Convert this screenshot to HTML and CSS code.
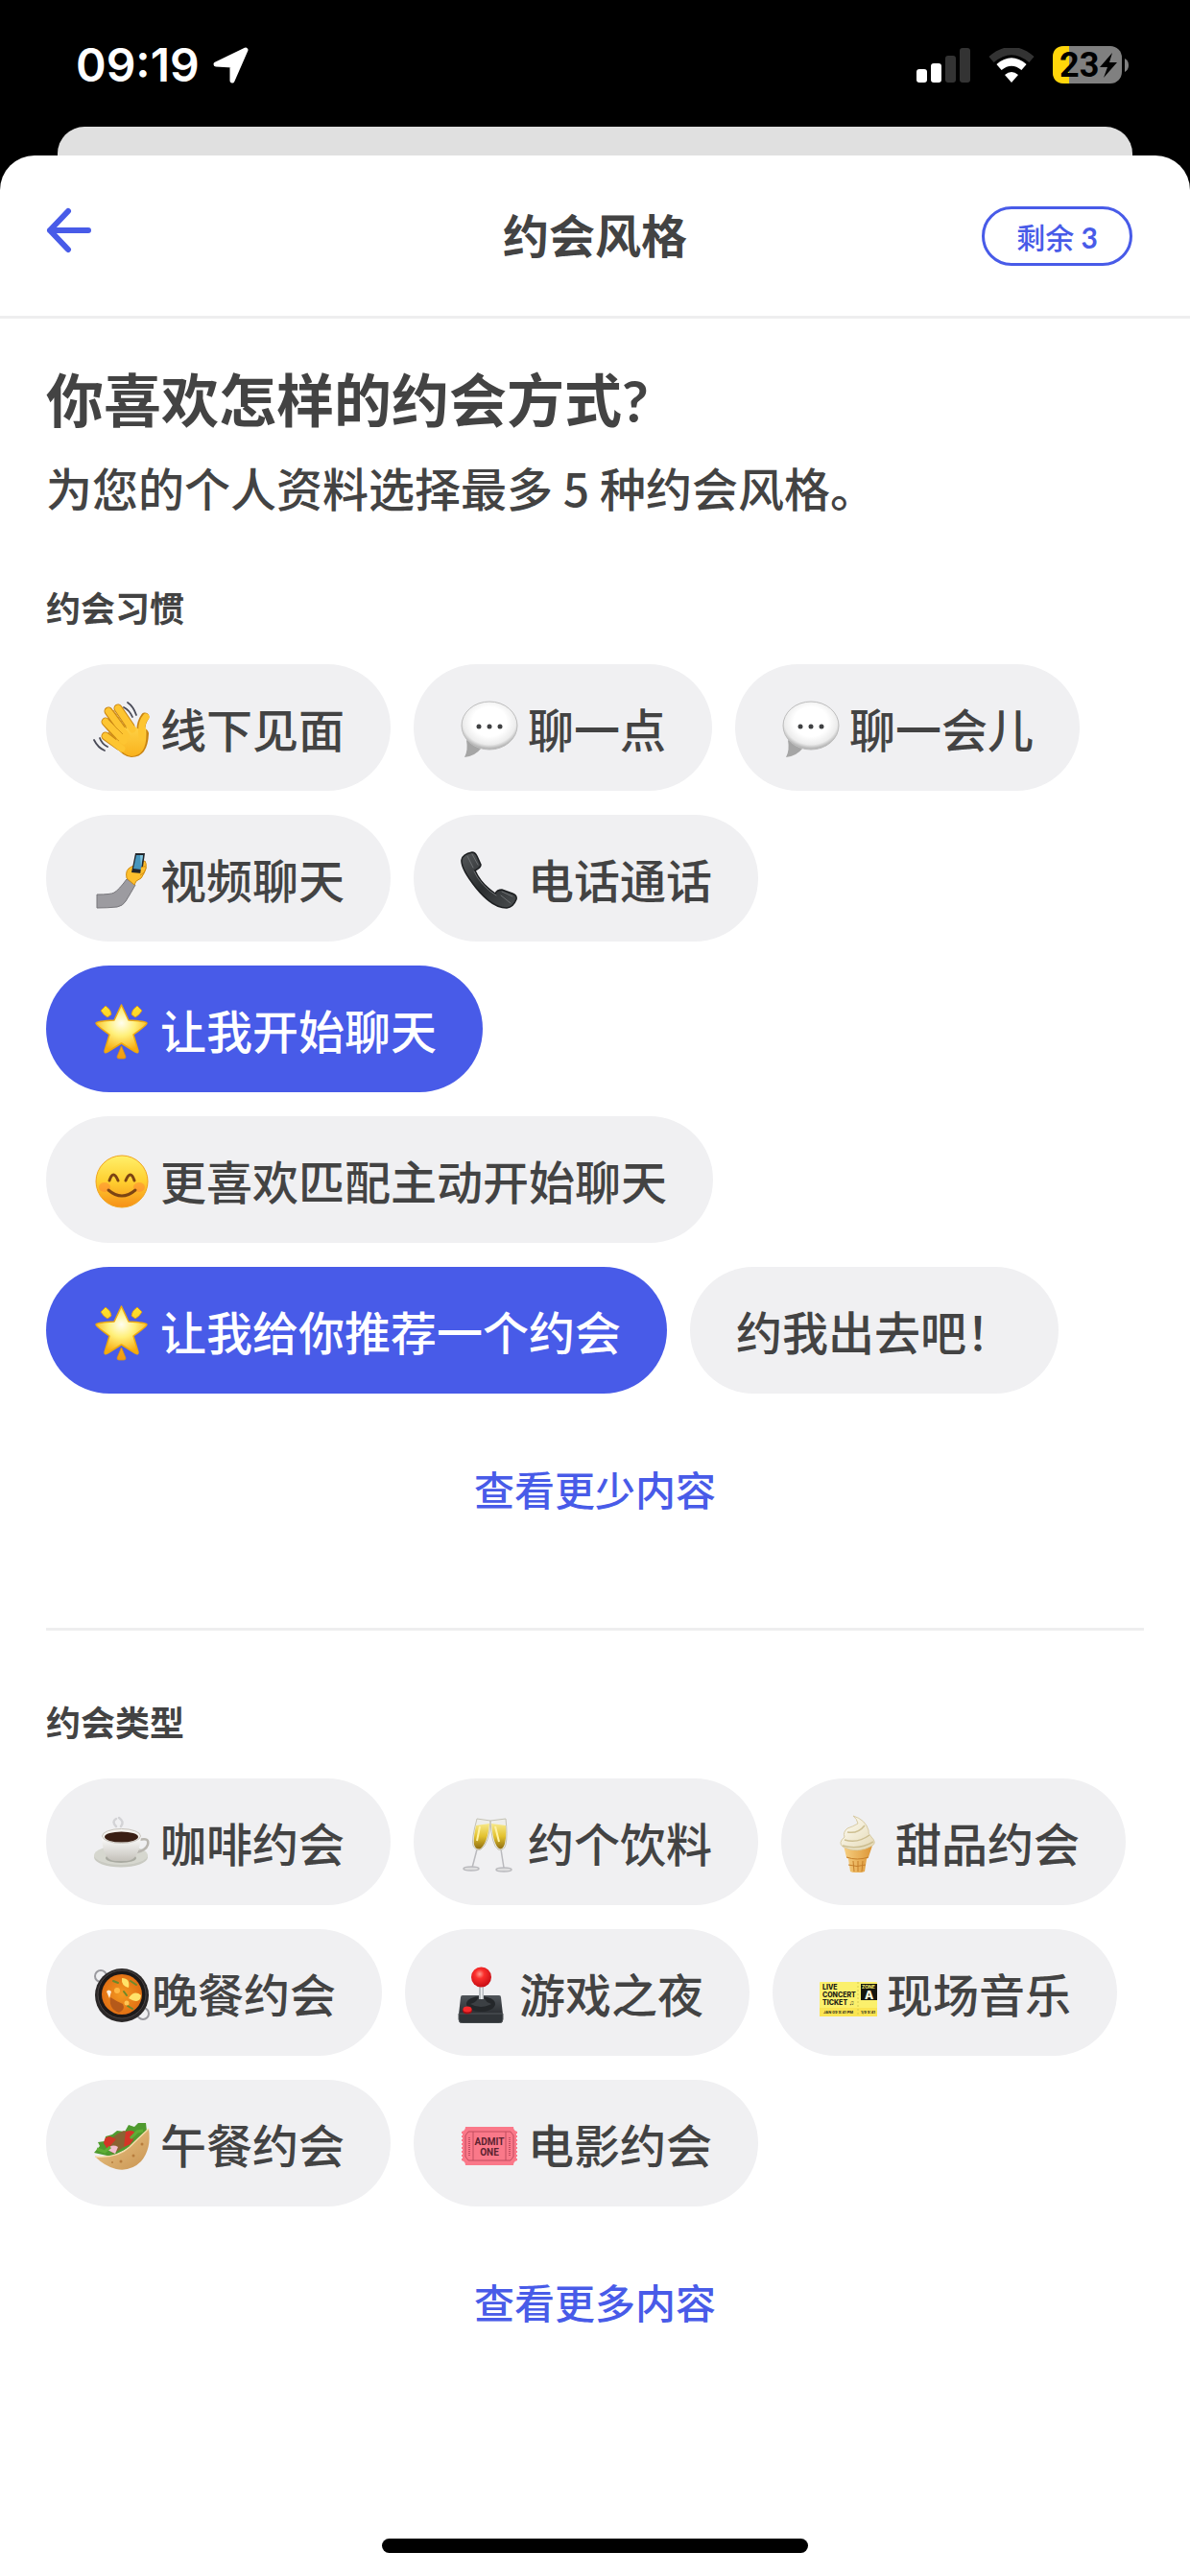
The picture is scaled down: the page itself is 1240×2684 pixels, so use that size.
FILE: index.html
```html
<!DOCTYPE html>
<html lang="zh-CN">
<head>
<meta charset="utf-8">
<meta name="viewport" content="width=device-width, initial-scale=1">
<title>约会风格</title>
<link rel="stylesheet" href="styles.css">
</head>
<body>
<svg class="defs" width="0" height="0" aria-hidden="true">
  <defs>
    <linearGradient id="g-skin" x1="0" y1="0" x2="0" y2="1"><stop offset="0" stop-color="#ffd54a"/><stop offset="1" stop-color="#f9b21d"/></linearGradient>
    <radialGradient id="g-bubble" cx=".5" cy=".42" r=".56"><stop offset=".55" stop-color="#fff"/><stop offset=".85" stop-color="#ececec"/><stop offset="1" stop-color="#b4b4b4"/></radialGradient>
    <linearGradient id="g-phone" x1="0" y1="0" x2="1" y2="1"><stop offset="0" stop-color="#55585a"/><stop offset=".5" stop-color="#2b2e30"/><stop offset="1" stop-color="#4a4d4f"/></linearGradient>
    <radialGradient id="g-star" cx=".5" cy=".38" r=".6"><stop offset="0" stop-color="#fffef0"/><stop offset=".45" stop-color="#fff07a"/><stop offset="1" stop-color="#f8ac10"/></radialGradient>
    <linearGradient id="g-ray" x1="0" y1="0" x2="0" y2="1"><stop offset="0" stop-color="#ffe32e"/><stop offset="1" stop-color="#f29a12"/></linearGradient>
    <linearGradient id="g-face" x1="0" y1="0" x2="0" y2="1"><stop offset="0" stop-color="#fff06a"/><stop offset=".5" stop-color="#ffcf30"/><stop offset="1" stop-color="#f68f16"/></linearGradient>
    <linearGradient id="g-cup" x1="0" y1="0" x2="0" y2="1"><stop offset="0" stop-color="#fff"/><stop offset="1" stop-color="#c4c1ba"/></linearGradient>
    <linearGradient id="g-wine" x1="0" y1="0" x2="0" y2="1"><stop offset="0" stop-color="#f7e98a"/><stop offset=".5" stop-color="#e3c22f"/><stop offset="1" stop-color="#8f6d10"/></linearGradient>
    <linearGradient id="g-cream" x1="0" y1="0" x2="1" y2="1"><stop offset="0" stop-color="#fffef6"/><stop offset="1" stop-color="#e4d8b4"/></linearGradient>
    <linearGradient id="g-cone" x1="0" y1="0" x2="1" y2="0"><stop offset="0" stop-color="#f6cf81"/><stop offset="1" stop-color="#dd9636"/></linearGradient>
    <radialGradient id="g-curry" cx=".5" cy=".5" r=".55"><stop offset="0" stop-color="#f39a22"/><stop offset="1" stop-color="#e06c12"/></radialGradient>
    <radialGradient id="g-ball" cx=".42" cy=".35" r=".65"><stop offset="0" stop-color="#ff9a8e"/><stop offset=".35" stop-color="#fb2f2c"/><stop offset="1" stop-color="#c80d14"/></radialGradient>
    <linearGradient id="g-base" x1="0" y1="0" x2="0" y2="1"><stop offset="0" stop-color="#50555a"/><stop offset="1" stop-color="#2a2d31"/></linearGradient>
    <linearGradient id="g-wrap" x1="0" y1="0" x2="1" y2="1"><stop offset="0" stop-color="#edc98a"/><stop offset="1" stop-color="#c99452"/></linearGradient>

    <symbol id="e-bubble" viewBox="0 0 62 64">
      <path d="M7 45Q9 56 5 63Q16 62 23 53Z" fill="#a5a5a5"/>
      <ellipse cx="31" cy="30" rx="29" ry="25" fill="url(#g-bubble)" stroke="#bdbdbd"/>
      <g fill="#3f4042"><circle cx="20" cy="31" r="2.500"/><circle cx="31" cy="31" r="2.500"/><circle cx="42" cy="31" r="2.500"/></g>
    </symbol>
    <symbol id="e-star" viewBox="0 0 62 64">
      <path d="M9 13L14 8Q20 12 20 17L16 20Q12 18 9 13ZM52 13L47 8Q41 12 41 17L45 20Q49 18 52 13ZM30.500 50L35 61Q35 63 33 63H28Q26 63 26 61Z" fill="url(#g-ray)" stroke="#dd940e" stroke-width=".8"/>
      <path d="M30.500 7L38 23Q56 24 57 26Q57 28 43 38L48 55Q48 58 45 56L30.500 47L16 56Q13 58 13 55L18 38Q4 28 4 26Q5 24 23 23Z" fill="url(#g-star)" stroke="#eda90f" stroke-width="1.500" stroke-linejoin="round"/>
    </symbol>
  </defs>
</svg>

<header class="status">
  <div class="status-left">
    <span class="time">09:19</span>
    <svg class="location" viewBox="0 0 38 38" width="38" height="38" aria-hidden="true"><path d="M3 18L34 3L20 35V19Z" fill="#fff" stroke="#fff" stroke-width="5" stroke-linejoin="round"/></svg>
  </div>
  <div class="status-right">
    <svg viewBox="0 0 56 36" width="56" height="36" role="img" aria-label="信号">
      <rect x="0" y="22" width="11" height="14" rx="3" fill="#fff"/><rect x="15" y="16" width="11" height="20" rx="3" fill="#fff"/>
      <rect x="30" y="8" width="11" height="28" rx="3" fill="#333"/><rect x="45" y="0" width="11" height="36" rx="3" fill="#333"/>
    </svg>
    <svg viewBox="0 0 48 36" width="48" height="36" role="img" aria-label="无线网络">
      <path d="M3 12Q24 -6 45 12" fill="none" stroke="#333" stroke-width="8"/>
      <path d="M11 20Q24 9 37 20" fill="none" stroke="#fff" stroke-width="8"/>
      <path d="M24 36L17 28Q24 22 31 28Z" fill="#fff"/>
    </svg>
    <svg viewBox="0 0 80 40" width="80" height="40" role="img" aria-label="电池">
      <rect width="72" height="39" rx="12" fill="#808080"/>
      <path d="M12 0H17V39H12Q0 39 0 27V12Q0 0 12 0Z" fill="#ffd60a"/>
      <path d="M75 13Q79 15 79 20Q79 25 75 27Z" fill="#808080"/>
      <text class="charge" x="7" y="32">23</text>
      <path d="M62 7L49 22H57L53 33L67 17H59Z" fill="#000"/>
    </svg>
  </div>
</header>

<div class="underlay"></div>

<div class="sheet">
  <header class="bar">
    <button class="back" type="button" aria-label="返回">
      <svg viewBox="0 0 48 48" width="48" height="48" aria-hidden="true"><path d="M23 4L4 24L23 44M4 24H44" fill="none" stroke="#485be8" stroke-width="6" stroke-linecap="round" stroke-linejoin="round"/></svg>
    </button>
    <h1 class="bar-title">约会风格</h1>
    <span class="remaining">剩余<span class="num"> 3</span></span>
  </header>

  <main class="content">
    <h2 class="question">你喜欢怎样的约会方式<span class="num">?</span></h2>
    <p class="hint">为您的个人资料选择最多 5 种约会风格。</p>

    <section class="group">
      <h3 class="label">约会习惯</h3>
      <div class="chips">
        <button class="chip" type="button" aria-pressed="false">
          <svg class="emoji" viewBox="0 0 62 64" aria-hidden="true">
            <g fill="none" stroke="#c98412" stroke-width="9" stroke-linecap="round"><path d="M27 12L40 31M17 15L33 37M14 26L29 43M14 41L28 51"/><path d="M55 21Q50 28 51 38"/></g>
            <path d="M24 37L40 27L50 36Q57 30 59 38Q58 63 41 63Q33 63 23 51Z" fill="#c98412"/>
            <path d="M27 37L40 28L49 34L56 32Q59 61 41 62Q33 61 24 50Z" fill="url(#g-skin)"/>
            <g fill="none" stroke="#fdc532" stroke-width="7" stroke-linecap="round"><path d="M27 12L42 34M17 15L36 41M14 26L33 46M14 41L31 54"/><path d="M56 21Q50 28 52 42"/></g>
            <path d="M22 14L36 33M17 24L32 39M17 37L28 46" stroke="#d4951b" stroke-width="1" fill="none"/>
            <path d="M37 6Q43 10 46 19M33 11Q39 14 42 21M2 45Q6 53 13 56M8 43Q10 49 16 52" fill="none" stroke="#4a4b58" stroke-width="1.800" stroke-linecap="round"/>
          </svg>
          <span>线下见面</span>
        </button>
        <button class="chip" type="button" aria-pressed="false"><svg class="emoji" aria-hidden="true"><use href="#e-bubble"/></svg><span>聊一点</span></button>
        <button class="chip" type="button" aria-pressed="false"><svg class="emoji" aria-hidden="true"><use href="#e-bubble"/></svg><span>聊一会儿</span></button>
        <button class="chip" type="button" aria-pressed="false">
          <svg class="emoji" viewBox="0 0 62 64" aria-hidden="true">
            <path d="M5 49Q20 49 23 47Q28 44 36 33L45 39Q40 48 35 56Q32 61 26 62Q16 63 5 63Z" fill="#9c9ba0" stroke="#77767b"/>
            <path d="M36 32Q34 23 41 20L55 14Q58 19 54 27Q52 33 46 35L44 39Z" fill="#fdbf2d" stroke="#d08d14"/>
            <path d="M45 6L55 6L52 27L41 26Z" fill="#23262b"/><path d="M46 8H53L51 23L43 22Z" fill="#4796bd"/><path d="M50 8L53 8L51 21Z" fill="#83c3dc"/>
            <path d="M51 21Q57 18 56 22Q55 27 50 29" fill="#fdbf2d" stroke="#d08d14"/>
          </svg>
          <span>视频聊天</span>
        </button>
        <button class="chip" type="button" aria-pressed="false">
          <svg class="emoji" viewBox="0 0 62 64" aria-hidden="true">
            <path d="M2 13Q3 7 13 5Q16 5 18 9L22 18Q22 21 16 24Q22 38 37 48Q39 44 44 44L55 48Q60 50 59 54Q56 62 49 63Q34 63 17 42Q1 22 2 13Z" fill="url(#g-phone)" stroke="#1c1e20" stroke-width="1.500"/>
            <path d="M8 9L14 21M13 7L19 18M15 25Q22 40 38 50M44 46L55 51M43 50L53 58" fill="none" stroke="#6d7072" stroke-width="1" stroke-linecap="round"/>
          </svg>
          <span>电话通话</span>
        </button>
        <button class="chip" type="button" aria-pressed="true"><svg class="emoji" aria-hidden="true"><use href="#e-star"/></svg><span>让我开始聊天</span></button>
        <button class="chip" type="button" aria-pressed="false">
          <svg class="emoji" viewBox="0 0 62 64" aria-hidden="true">
            <circle cx="31" cy="34" r="27" fill="url(#g-face)" stroke="#f0a41d"/>
            <ellipse cx="13" cy="40" rx="6" ry="5" fill="#ff6a3a" opacity=".35"/><ellipse cx="49" cy="40" rx="6" ry="5" fill="#ff6a3a" opacity=".35"/>
            <path d="M18 33Q22 21 27 33M35 33Q40 21 44 33" fill="none" stroke="#7c4413" stroke-width="3" stroke-linecap="round"/>
            <path d="M17 43Q31 55 45 43" fill="none" stroke="#7c4413" stroke-width="3" stroke-linecap="round"/>
          </svg>
          <span>更喜欢匹配主动开始聊天</span>
        </button>
        <button class="chip" type="button" aria-pressed="true"><svg class="emoji" aria-hidden="true"><use href="#e-star"/></svg><span>让我给你推荐一个约会</span></button>
        <button class="chip" type="button" aria-pressed="false"><span>约我出去吧！</span></button>
      </div>
      <button class="toggle" type="button">查看更少内容</button>
    </section>

    <section class="group">
      <h3 class="label">约会类型</h3>
      <div class="chips">
        <button class="chip" type="button" aria-pressed="false">
          <svg class="emoji" viewBox="0 0 62 64" aria-hidden="true">
            <path d="M25 16Q20 11 25 8M30 16Q34 11 28 7" fill="none" stroke="#d3d3d6" stroke-width="2.500" stroke-linecap="round"/>
            <ellipse cx="30" cy="48" rx="28" ry="10.500" fill="#c9cac2"/><ellipse cx="30" cy="46" rx="28" ry="10" fill="#d6d7cf"/><ellipse cx="30" cy="49" rx="16" ry="5" fill="#a9aaa1"/>
            <path d="M49 30Q60 27 58 35Q56 41 46 43" fill="none" stroke="#b9b6b0" stroke-width="2.500"/>
            <path d="M10 26Q11 52 24 52H36Q49 52 51 26Z" fill="url(#g-cup)"/>
            <ellipse cx="30.500" cy="26" rx="20" ry="7.500" fill="#f4f2ee" stroke="#c7c3bc"/><ellipse cx="30.500" cy="27" rx="17.500" ry="5.500" fill="#3a1f14"/>
          </svg>
          <span>咖啡约会</span>
        </button>
        <button class="chip" type="button" aria-pressed="false">
          <svg class="emoji" viewBox="0 0 62 64" aria-hidden="true">
            <g fill="none" stroke="#b9b9bd" stroke-width="1.500"><path d="M18 40L13 59M43 40L46 59"/><ellipse cx="12" cy="60" rx="8" ry="2" fill="#dededf"/><ellipse cx="46" cy="61" rx="8" ry="2" fill="#dededf"/></g>
            <path d="M18 8L32 10Q31 34 22 40Q17 42 14 36Q12 30 18 8ZM48 8L32 10Q33 35 40 40Q46 42 48 35Q50 26 48 8Z" fill="#eeeeea" stroke="#c4c2b4"/>
            <path d="M17 15L31 13Q29 33 22 39Q17 41 15 35Q14 29 17 15ZM48 15L33 13Q35 35 41 39Q45 41 47 34Q49 26 48 15Z" fill="url(#g-wine)"/>
            <path d="M21 16L18 31M37 16L41 32" stroke="#fff3a6" stroke-width="2" fill="none"/>
          </svg>
          <span>约个饮料</span>
        </button>
        <button class="chip" type="button" aria-pressed="false">
          <svg class="emoji" viewBox="0 0 62 64" aria-hidden="true">
            <path d="M17 36L20 48L22 50L24 63Q31 66 39 63L41 50L43 48L47 36Z" fill="url(#g-cone)"/>
            <path d="M20 48Q31 52 43 48M27 52L28 63M32 52V63M37 52L36 63M22 56Q31 59 40 56" fill="none" stroke="#c67f2a" stroke-width="1"/>
            <path d="M27 5Q40 9 43 20Q42 23 46 27Q52 33 47 36Q31 45 16 37Q11 33 18 27Q16 22 21 18Q27 16 32 13Q31 8 27 5Z" fill="url(#g-cream)" stroke="#d8cba4"/>
            <path d="M21 22Q32 24 39 15M18 30Q32 34 44 25M16 36Q33 41 48 32" fill="none" stroke="#cdbf92" stroke-width="1.500"/>
          </svg>
          <span>甜品约会</span>
        </button>
        <button class="chip chip-tight" type="button" aria-pressed="false">
          <svg class="emoji" viewBox="0 0 62 64" aria-hidden="true">
            <circle cx="9" cy="15" r="6" fill="none" stroke="#9a9a9f" stroke-width="2"/><circle cx="53" cy="54" r="6" fill="none" stroke="#9a9a9f" stroke-width="2"/>
            <circle cx="31" cy="35" r="28" fill="#2a2727"/><circle cx="31" cy="34" r="25" fill="#1c1919" stroke="#4a4444"/>
            <circle cx="31" cy="34" r="21" fill="url(#g-curry)"/>
            <path d="M31 17Q40 17 38 27Q30 25 31 17ZM38 38Q44 29 51 35Q50 45 38 38Z" fill="#ffe36a"/>
            <path d="M19 37Q25 41 32 44Q35 50 28 53Q17 49 19 37Z" fill="#b5591a"/><path d="M15 31Q17 28 20 31L18 38Z" fill="#fff0d8"/>
            <path d="M40 20L46 24M33 31L36 35M37 46L42 49M22 20L27 22" stroke="#6b8a2c" stroke-width="2" stroke-linecap="round"/>
            <circle cx="26" cy="30" r="3" fill="#ffb845"/><circle cx="36" cy="43" r="2.500" fill="#ffc554"/>
          </svg>
          <span>晚餐约会</span>
        </button>
        <button class="chip" type="button" aria-pressed="false">
          <svg class="emoji" viewBox="0 0 62 64" aria-hidden="true">
            <path d="M12 35H50Q52 35 52 37L54 55H8L10 37Q10 35 12 35Z" fill="url(#g-base)"/><path d="M8 54H54V60Q54 64 50 64H12Q8 64 8 60Z" fill="#303438" stroke="#54585c"/>
            <ellipse cx="31" cy="44" rx="15" ry="8" fill="#24272a"/><path d="M20 44Q28 42 29 35H34Q35 42 42 44Q31 50 20 44Z" fill="#3c4044"/>
            <rect x="29" y="24" width="5" height="15" fill="#b8bcc0"/><rect x="31" y="24" width="1.500" height="15" fill="#eef0f1"/>
            <circle cx="31.500" cy="16" r="10.500" fill="url(#g-ball)"/><ellipse cx="17" cy="51" rx="5" ry="3.500" fill="#a50f15"/><ellipse cx="17" cy="49.500" rx="4.500" ry="3" fill="#f52a2c"/>
          </svg>
          <span>游戏之夜</span>
        </button>
        <button class="chip" type="button" aria-pressed="false">
          <svg class="emoji" viewBox="0 0 62 64" aria-hidden="true">
            <rect x="1" y="21" width="60" height="36" rx="1" fill="#fbf06c"/><path d="M1 48H61V57H1Z" fill="#fbe552"/><path d="M41 21V57" stroke="#d6ca4c" stroke-dasharray="2 2"/>
            <rect x="44" y="23" width="17" height="17" fill="#16160e"/>
            <g class="ticket-text" fill="#1c1c14"><text x="4" y="29">LIVE</text><text x="4" y="37">CONCERT</text><text x="4" y="45">TICKET ♫</text></g>
            <text class="ticket-zone" x="45" y="28" fill="#fbf06c">ZONE</text><text class="ticket-letter" x="48" y="39" fill="#fffde0">A</text>
            <g class="ticket-small" fill="#2a2a1c"><text x="5" y="54">JAN 09 9:41 PM</text><text x="44" y="54">1/9 9:41</text></g>
          </svg>
          <span>现场音乐</span>
        </button>
        <button class="chip" type="button" aria-pressed="false">
          <svg class="emoji" viewBox="0 0 62 64" aria-hidden="true">
            <path d="M2 42L8 35L6 31L13 30L14 25L21 23L26 19L34 20L38 13L44 15L48 11L56 11L57 20L42 35L20 46Z" fill="#4f9a2f"/>
            <path d="M14 36Q20 24 33 19Q44 21 43 30L22 43Z" fill="#8a6233"/><path d="M12 32Q13 24 19 25L25 28L16 38ZM35 20Q43 17 45 22L40 33L33 36Z" fill="#d33527"/><path d="M16 39Q20 32 27 36L24 43Z" fill="#f0bfd0"/>
            <path d="M5 38L13 41L19 36M40 27L47 20L53 19" stroke="#5fae35" stroke-width="3" fill="none"/>
            <path d="M3 46Q26 48 39 36Q47 28 59 17Q62 38 51 51Q40 62 25 59Q13 56 3 46Z" fill="url(#g-wrap)"/>
            <path d="M3 46Q26 48 39 36Q47 28 59 17" fill="none" stroke="#f6dcaa" stroke-width="1.500"/>
            <g fill="#b77c3c"><circle cx="30" cy="51" r="1.500"/><circle cx="43" cy="45" r="1.500"/><circle cx="52" cy="33" r="1.500"/><circle cx="21" cy="52" r="1"/></g>
          </svg>
          <span>午餐约会</span>
        </button>
        <button class="chip" type="button" aria-pressed="false">
          <svg class="emoji" viewBox="0 0 62 64" aria-hidden="true">
            <path d="M6 15H56Q56 19 60 20V50Q56 51 56 55H6Q6 51 2 50V20Q6 19 6 15Z" fill="#fa7889"/>
            <path d="M2 22V50M60 22V50" stroke="#f0f0f2" stroke-width="2" stroke-dasharray="2 2"/>
            <path d="M9 20H53L56 24V46L53 50H9L6 46V24ZM14 20V50M48 20V50" fill="none" stroke="#c24c5f" stroke-width="1"/>
            <path d="M10 26V45M52 26V45" stroke="#c24c5f" stroke-width="2" stroke-dasharray="1 1"/>
            <g class="admit" fill="#5c2230" text-anchor="middle"><text x="31" y="34">ADMIT</text><text x="31" y="45">ONE</text></g>
          </svg>
          <span>电影约会</span>
        </button>
      </div>
      <button class="toggle" type="button">查看更多内容</button>
    </section>
  </main>

  <div class="home-indicator"></div>
</div>
</body>
</html>
```
FILE: styles.css
```css
:root {
  --accent: #485be8;
  --ink: #434343;
  --chip: #f0f0f2;
  --line: #eeeeef;
}

* {
  box-sizing: border-box;
}

body {
  margin: 0;
  min-height: 100vh;
  display: flex;
  flex-direction: column;
  background: #000;
  color: var(--ink);
  font-family: "Noto Sans CJK SC", sans-serif;
  font-weight: 500;
}

h1, h2, h3, p {
  margin: 0;
  font-weight: 700;
}

button {
  margin: 0;
  padding: 0;
  border: 0;
  background: none;
  color: inherit;
  font: inherit;
  cursor: pointer;
}

.defs {
  position: absolute;
}

.num {
  font-family: Lato, sans-serif;
  line-height: 1;
  white-space: pre;
}

/* Status bar */
.status {
  height: 132px;
  padding: 4px 63px 0 79px;
  display: flex;
  align-items: center;
  justify-content: space-between;
  color: #fff;
}

.status-left {
  display: flex;
  align-items: center;
  gap: 14px;
}

.time {
  font: 600 48px/60px Inter, sans-serif;
}

.status-right {
  display: flex;
  align-items: center;
  gap: 19px;
}

.charge {
  font: 700 36px Roboto, sans-serif;
}

/* Stacked sheets */
.underlay {
  height: 30px;
  margin: 0 60px;
  border-radius: 28px 28px 0 0;
  background: #e0e0e0;
}

.sheet {
  flex: 1;
  display: flex;
  flex-direction: column;
  border-radius: 36px 36px 0 0;
  background: #fff;
}

.bar {
  min-height: 170px;
  padding: 0 60px 0 48px;
  display: grid;
  grid-template-columns: 1fr auto 1fr;
  align-items: center;
  border-bottom: 3px solid var(--line);
}

.back {
  justify-self: start;
  padding-bottom: 12px;
}

.back svg {
  display: block;
}

.bar-title {
  padding: 0 0 6px 12px;
  font-size: 48px;
  line-height: 60px;
}

.remaining {
  justify-self: end;
  padding: 0 33px;
  border: 3px solid var(--accent);
  border-radius: 32px;
  color: var(--accent);
  font-size: 30px;
  line-height: 56px;
}

.remaining .num {
  font-weight: 700;
}

/* Content */
.content {
  padding: 40px 48px 60px;
}

.question {
  font-size: 60px;
  line-height: 84px;
}

.hint {
  margin-top: 20px;
  font-size: 48px;
  line-height: 62px;
  font-weight: 500;
}

.group {
  padding-top: 70px;
}

.group + .group {
  margin-top: 115px;
  border-top: 3px solid var(--line);
}

.label {
  font-size: 36px;
  line-height: 48px;
}

.chips {
  margin-top: 36px;
  display: flex;
  flex-wrap: wrap;
  gap: 25px 24px;
}

.chip {
  display: flex;
  align-items: center;
  gap: 9px;
  height: 132px;
  padding: 0 48px;
  border-radius: 66px;
  background: var(--chip);
  font-size: 48px;
  line-height: 60px;
  white-space: nowrap;
}

.chip-tight {
  gap: 0;
}

.chip[aria-pressed="true"] {
  background: var(--accent);
  color: #fff;
}

.emoji {
  flex: none;
  width: 62px;
  height: 64px;
}

.ticket-text {
  font: 800 7px Inter, sans-serif;
}

.ticket-zone {
  font: 700 5px Inter, sans-serif;
}

.ticket-letter {
  font: 800 12px Inter, sans-serif;
}

.ticket-small {
  font: 700 4px Inter, sans-serif;
}

.admit {
  font: 700 10px Roboto, sans-serif;
}

.toggle {
  display: block;
  margin: 69px auto 0;
  color: var(--accent);
  font-size: 42px;
  line-height: 60px;
  font-weight: 500;
}

.home-indicator {
  width: 444px;
  height: 15px;
  margin: auto auto 24px;
  border-radius: 8px;
  background: #000;
}
```
